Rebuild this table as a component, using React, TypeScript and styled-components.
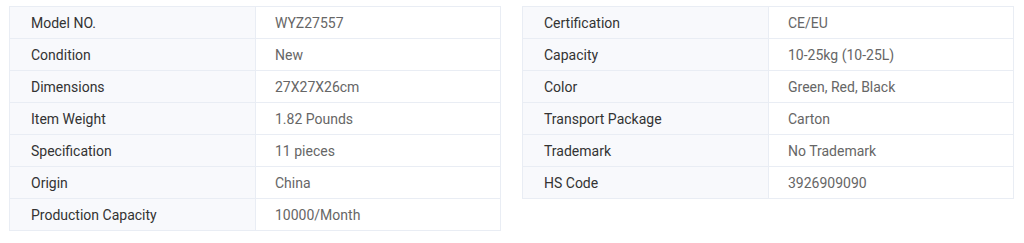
import React from "react";
import styled, { createGlobalStyle } from "styled-components";

const GlobalStyle = createGlobalStyle`
  body {
    margin: 0;
    background: #fff;
    font-family: Roboto, "Liberation Sans", Arial, sans-serif;
  }
`;

const leftRows = [
  ["Model NO.", "WYZ27557"],
  ["Condition", "New"],
  ["Dimensions", "27X27X26cm"],
  ["Item Weight", "1.82 Pounds"],
  ["Specification", "11 pieces"],
  ["Origin", "China"],
  ["Production Capacity", "10000/Month"],
];

const rightRows = [
  ["Certification", "CE/EU"],
  ["Capacity", "10-25kg (10-25L)"],
  ["Color", "Green, Red, Black"],
  ["Transport Package", "Carton"],
  ["Trademark", "No Trademark"],
  ["HS Code", "3926909090"],
];

export default function App() {
  return (
    <>
      <GlobalStyle />
      <Wrapper>
        <SpecTable rows={leftRows} />
        <SpecTable rows={rightRows} />
      </Wrapper>
    </>
  );
}

function SpecTable({ rows }: { rows: string[][] }) {
  return (
    <Table>
      {rows.map(([label, value]) => (
        <Row key={label}>
          <Label>{label}</Label>
          <Value>{value}</Value>
        </Row>
      ))}
    </Table>
  );
}

const Wrapper = styled.div`
  display: flex;
  align-items: flex-start;
  gap: 21px;
  padding: 6px 10px 0 9px;
`;

const Table = styled.div`
  flex: 1;
  border: 1px solid #e9edf4;
  border-top: none;
`;

const Row = styled.div`
  display: grid;
  grid-template-columns: 246px 1fr;
  box-sizing: border-box;
  height: 32px;
  border-top: 1px solid #e9edf4;
  font-size: 14px;
  line-height: 30px;
`;

const Label = styled.div`
  background: #f8f9fc;
  color: #333;
  padding: 1px 0 0 21px;
  border-right: 1px solid #e9edf4;
`;

const Value = styled.div`
  background: #fff;
  color: #666;
  padding: 1px 0 0 19px;
`;
